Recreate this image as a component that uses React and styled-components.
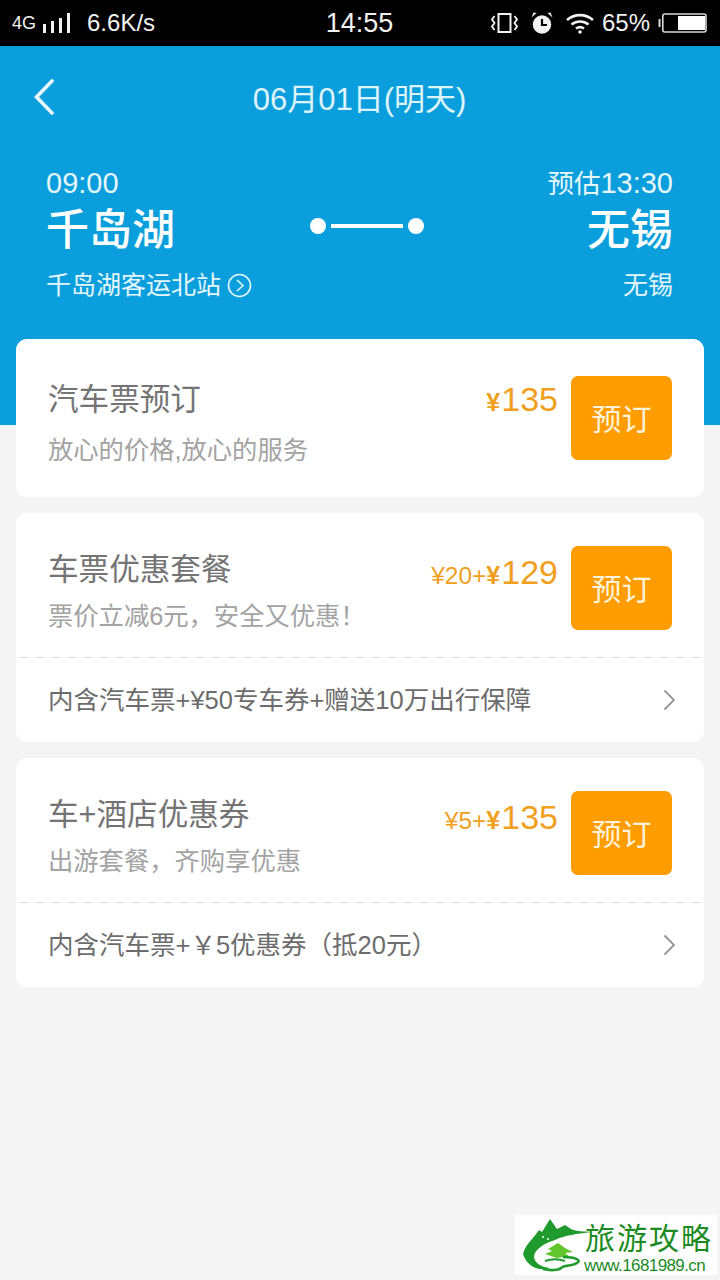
import React from "react"
import styled, { createGlobalStyle } from "styled-components"

const FONT = `"Liberation Sans", "Noto Sans CJK SC", sans-serif`

const GlobalStyle = createGlobalStyle`
  html, body {
    margin: 0;
    padding: 0;
    background: #f4f4f4;
  }
  * {
    box-sizing: border-box;
  }
`

const Page = styled.div`
  position: relative;
  width: 720px;
  height: 1280px;
  overflow: hidden;
  background: #f4f4f4;
  font-family: ${FONT};
`

const StatusBar = styled.div`
  height: 46px;
  background: #000;
  color: #f2f2f2;
  display: grid;
  grid-template-columns: 1fr auto 1fr;
  align-items: center;
  padding: 0 13px 0 12px;
`

const StatusLeft = styled.div`
  display: flex;
  align-items: center;
`

const StatusRight = styled.div`
  display: flex;
  align-items: center;
  justify-content: flex-end;
`

const NetType = styled.span`
  font-size: 18px;
  margin-right: 7px;
`

const Speed = styled.span`
  font-size: 24px;
  margin-left: 16px;
`

const Clock = styled.span`
  font-size: 27px;
`

const Percent = styled.span`
  font-size: 24px;
  margin: 0 8px;
`

const StatusIcon = styled.svg`
  display: block;
  flex: none;
  margin-right: ${p => p.$gap || 0}px;
`

const Hero = styled.section`
  height: 379px;
  background: #0a9fdc;
  color: #fff;
  padding: 0 47px 0 46px;
`

const Nav = styled.div`
  position: relative;
  height: 100px;
  display: flex;
  align-items: center;
  justify-content: center;
`

const BackIcon = styled.svg`
  position: absolute;
  left: -13px;
  top: 33px;
`

const NavTitle = styled.div`
  font-size: 31px;
  color: #dff3fb;
`

const Route = styled.div`
  display: grid;
  grid-template-columns: 1fr auto 1fr;
  align-items: center;
  margin-top: 19px;
`

const Stop = styled.div`
  display: flex;
  flex-direction: column;
  align-items: ${p => (p.$end ? "flex-end" : "flex-start")};
`

const StopTime = styled.div`
  height: 36px;
  font-size: 29px;
  line-height: 36px;
  color: #e6f6fc;
`

const Estimate = styled.span`
  font-size: 26.500px;
`

const StopCity = styled.div`
  font-size: 43px;
  line-height: 56px;
  font-weight: 500;
  margin-top: 1px;
`

const StopStation = styled.div`
  display: flex;
  align-items: center;
  gap: 6px;
  font-size: 25px;
  line-height: 36px;
  margin-top: 9px;
  color: #e6f6fc;
`

const Connector = styled.div`
  display: flex;
  align-items: center;
  gap: 5px;
  margin: -16px 0 0 15px;
`

const Dot = styled.span`
  width: 16px;
  height: 16px;
  border-radius: 50%;
  background: #fff;
`

const Line = styled.span`
  width: 72px;
  height: 4px;
  background: #fff;
`

const CardList = styled.div`
  display: flex;
  flex-direction: column;
  gap: 16px;
  margin: -86px 16px 0;
`

const Card = styled.article`
  background: #fff;
  border-radius: 11px;
`

const CardMain = styled.div`
  height: ${p => p.$height}px;
  display: flex;
  align-items: flex-start;
  padding: ${p => p.$top}px 32px 0 32px;
`

const CardText = styled.div`
  flex: 1;
  min-width: 0;
`

const CardTitle = styled.div`
  font-size: 30.600px;
  line-height: 42px;
  color: #747474;
  margin-top: ${p => p.$top}px;
`

const CardSub = styled.div`
  font-size: 25.300px;
  line-height: 36px;
  color: #a3a3a3;
  margin-top: ${p => p.$top}px;
`

const Price = styled.div`
  display: flex;
  align-items: baseline;
  color: #f0a01e;
  margin: ${p => p.$top}px 13px 0 0;
  font-size: 34px;
  line-height: 44px;
`

const Small = styled.span`
  font-size: 24.500px;
`

const Yen = styled.span`
  font-size: 25px;
  font-weight: 700;
  margin-right: 1px;
`

const Button = styled.button`
  width: 101px;
  height: 84px;
  border: 0;
  border-radius: 7px;
  background: #ff9c00;
  color: #fff3dd;
  font-family: ${FONT};
  font-size: 30px;
  padding: 0 0 2px;
`

const CardFoot = styled.div`
  height: 85px;
  margin: 0 3px;
  background-image: linear-gradient(to right, #dedede 10px, transparent 10px);
  background-size: 16px 1px;
  background-repeat: repeat-x;
  background-position: 0 0;
  display: flex;
  align-items: center;
  justify-content: space-between;
  padding: 0 25px 4px 29px;
  font-size: 25.500px;
  color: #6c6c6c;
`

const FootArrow = styled.svg`
  display: block;
  margin-top: 4px;
`

const Watermark = styled.div`
  position: absolute;
  left: 515px;
  top: 1215px;
  width: 202px;
  height: 60px;
  background: #fff;
`

const WatermarkLogo = styled.svg`
  position: absolute;
  left: 0;
  top: 0;
`

const WatermarkName = styled.div`
  position: absolute;
  left: 70px;
  top: 5px;
  font-family: "Noto Sans CJK SC", serif;
  font-size: 30px;
  line-height: 32px;
  letter-spacing: 2px;
  white-space: nowrap;
  color: #1b8a1f;
`

const WatermarkUrl = styled.div`
  position: absolute;
  left: 69px;
  top: 41px;
  font-family: "Liberation Sans", sans-serif;
  font-size: 17px;
  line-height: 20px;
  letter-spacing: -0.6px;
  white-space: nowrap;
  color: #1b8a1f;
`

const Chevron = () => (
  <FootArrow width="14" height="22" viewBox="0 0 14 22" fill="none">
    <path d="M2.500 1.500 12 11 2.500 20.500" stroke="#959595" strokeWidth="1.800" />
  </FootArrow>
)

const cards = [
  { title: "汽车票预订", sub: "放心的价格,放心的服务", price: "135", height: 158, top: 37, titleTop: 2, subTop: 12, priceTop: 1 },
  { title: "车票优惠套餐", sub: "票价立减6元，安全又优惠！", extra: "¥20+", price: "129", height: 144, top: 33, titleTop: 2, subTop: 8, priceTop: 4, foot: "内含汽车票+¥50专车券+赠送10万出行保障" },
  { title: "车+酒店优惠券", sub: "出游套餐，齐购享优惠", extra: "¥5+", price: "135", height: 144, top: 33, titleTop: 2, subTop: 8, priceTop: 4, foot: "内含汽车票+￥5优惠券（抵20元）" },
]

const App = () => {
  return (
    <Page>
      <GlobalStyle />
      <StatusBar>
        <StatusLeft>
          <NetType>4G</NetType>
          <StatusIcon width="28" height="22" viewBox="0 0 28 22" fill="#f2f2f2">
            <rect x="0" y="12" width="3" height="9" />
            <rect x="8" y="9" width="3" height="12" />
            <rect x="16" y="6" width="3" height="15" />
            <rect x="24" y="1" width="3" height="20" />
          </StatusIcon>
          <Speed>6.6K/s</Speed>
        </StatusLeft>
        <Clock>14:55</Clock>
        <StatusRight>
          <StatusIcon $gap={13} width="27" height="22" viewBox="0 0 27 22" fill="none" stroke="#f2f2f2" strokeWidth="2">
            <rect x="7.500" y="2" width="12" height="18" />
            <path d="M3.500 4 1 7.500 3.500 11 1 14.500 3.500 18M23.500 4 26 7.500 23.500 11 26 14.500 23.500 18" strokeWidth="1.800" />
          </StatusIcon>
          <StatusIcon $gap={13} width="22" height="22" viewBox="0 0 22 22" fill="#f2f2f2">
            <circle cx="11" cy="12.500" r="9.200" />
            <path d="M11 7v6h5" fill="none" stroke="#000" strokeWidth="2.200" />
            <path d="M.5 5.500 5.500 1 2.500.5ZM21.500 5.500 16.500 1l3-.5Z" />
          </StatusIcon>
          <StatusIcon width="28" height="21" viewBox="0 0 28 21" fill="none" stroke="#f2f2f2" strokeWidth="2.600">
            <path d="M1 7C8.500.5 19.500.5 27 7M5.500 11.500c5-4 12-4 17 0M10 15.500c2.500-1.800 5.500-1.800 8 0" />
            <circle cx="14" cy="19" r="1.800" fill="#f2f2f2" stroke="none" />
          </StatusIcon>
          <Percent>65%</Percent>
          <StatusIcon width="49" height="20" viewBox="0 0 49 20" fill="none">
            <path d="M1.500 6v8" stroke="#d8d8d8" strokeWidth="2" />
            <rect x="4.800" y="1" width="43.200" height="18" rx="2" stroke="#d8d8d8" strokeWidth="1.600" />
            <rect x="20" y="3" width="27" height="14" fill="#fff" />
          </StatusIcon>
        </StatusRight>
      </StatusBar>

      <Hero>
        <Nav>
          <BackIcon width="22" height="36" viewBox="0 0 22 36" fill="none">
            <path d="M19 2 3.500 18 19 34" stroke="#e8f7fd" strokeWidth="3.600" strokeLinecap="round" />
          </BackIcon>
          <NavTitle>06月01日(明天)</NavTitle>
        </Nav>
        <Route>
          <Stop>
            <StopTime>09:00</StopTime>
            <StopCity>千岛湖</StopCity>
            <StopStation>
              千岛湖客运北站
              <svg width="25" height="25" viewBox="0 0 25 25" fill="none" stroke="#e6f6fc" strokeWidth="1.600">
                <circle cx="12.500" cy="12.500" r="11" />
                <path d="M10 7l6 5.500-6 5.500" />
              </svg>
            </StopStation>
          </Stop>
          <Connector>
            <Dot />
            <Line />
            <Dot />
          </Connector>
          <Stop $end>
            <StopTime><Estimate>预估</Estimate>13:30</StopTime>
            <StopCity>无锡</StopCity>
            <StopStation>无锡</StopStation>
          </Stop>
        </Route>
      </Hero>

      <CardList>
        {cards.map(card => (
          <Card key={card.title}>
            <CardMain $height={card.height} $top={card.top}>
              <CardText>
                <CardTitle $top={card.titleTop}>{card.title}</CardTitle>
                <CardSub $top={card.subTop}>{card.sub}</CardSub>
              </CardText>
              <Price $top={card.priceTop}>
                {card.extra && <Small>{card.extra}</Small>}
                <Yen>¥</Yen>
                {card.price}
              </Price>
              <Button>预订</Button>
            </CardMain>
            {card.foot && (
              <CardFoot>
                {card.foot}
                <Chevron />
              </CardFoot>
            )}
          </Card>
        ))}
      </CardList>

      <Watermark>
        <WatermarkLogo width="80" height="60" viewBox="0 0 80 60">
          <path d="M8 39C10 30 18 24 24 15L27 17 35 4 42 14 50 10 56 14C62 17 70 16 76 17 62 19 50 20 40 25 30 28 20 34 19 41 19 48 26 52 35 53 25 57 12 52 8 39Z" fill="#1f9a2c" />
          <path d="M43 28 50 33 58 37 50 38 54 41 42 43 30 39 37 36 33 34Z" fill="#62c52c" />
          <path d="M48 42C60 42 67 45 62 48 58 51 48 50 46 53 44 55 36 56 28 54" fill="none" stroke="#1f9a2c" strokeWidth="2.600" />
          <path d="M30 46C36 44 44 44 50 46" fill="none" stroke="#1f9a2c" strokeWidth="2" />
          <circle cx="28" cy="22" r="1" fill="#fff" />
          <circle cx="33" cy="24" r="1" fill="#fff" />
        </WatermarkLogo>
        <WatermarkName>旅游攻略</WatermarkName>
        <WatermarkUrl>www.1681989.cn</WatermarkUrl>
      </Watermark>
    </Page>
  )
}

export default App
